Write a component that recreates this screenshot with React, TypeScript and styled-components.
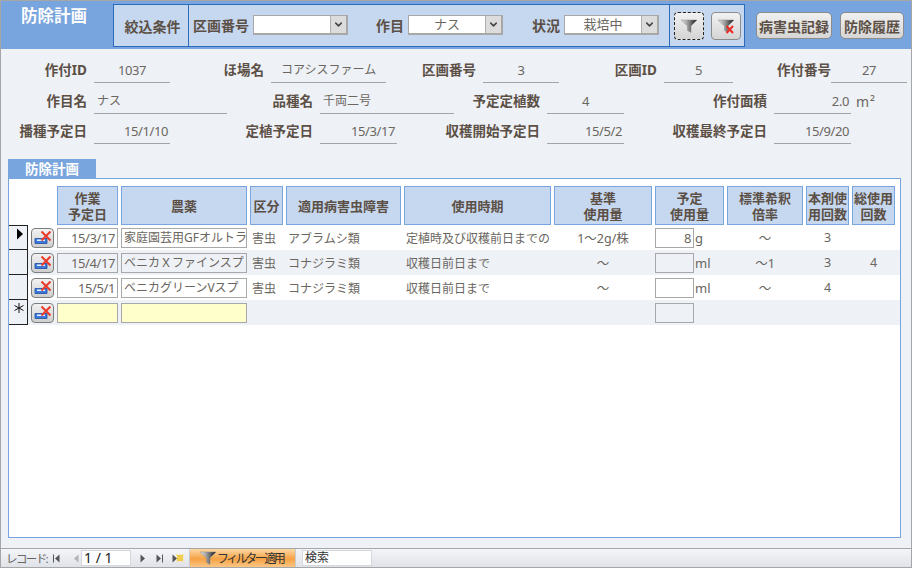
import { createGlobalStyle } from 'styled-components'
import styled from 'styled-components'
import { ChevronDown } from 'lucide-react'

const GlobalStyle = createGlobalStyle`
    html, body {
        margin: 0;
        padding: 0;
        background: #eef1f6;
    }
    * {
        box-sizing: border-box;
    }
`

type TField = {
    label: string
    value: string
    align?: 'left' | 'center' | 'right'
    flush?: boolean
    inset?: boolean
}

type TRecord = {
    date: string
    drug: string
    area: string
    disease: string
    timing: string
    base: string
    amount: string
    unit: string
    ratio: string
    count: string
    total: string
    alt: boolean
    current?: boolean
}

const formRows: { cols: string; fields: TField[]; unit?: string }[] = [
    {
        cols: '93px 76px 101px 115px 97px 76px 105px 69px 98px 76px',
        fields: [
            { label: '作付ID', value: '1037', align: 'center' },
            { label: 'ほ場名', value: 'コアシスファーム', align: 'left', inset: true },
            { label: '区画番号', value: '3', align: 'center' },
            { label: '区画ID', value: '5', align: 'center' },
            { label: '作付番号', value: '27', align: 'center', flush: true },
        ],
    },
    {
        cols: '93px 133px 93px 134px 93px 77px 150px 77px 30px',
        unit: 'm²',
        fields: [
            { label: '作目名', value: 'ナス' },
            { label: '品種名', value: '千両二号' },
            { label: '予定定植数', value: '4', align: 'center' },
            { label: '作付面積', value: '2.0', align: 'right' },
        ],
    },
    {
        cols: '93px 76px 150px 77px 150px 77px 150px 77px',
        fields: [
            { label: '播種予定日', value: '15/1/10', align: 'right' },
            { label: '定植予定日', value: '15/3/17', align: 'right' },
            { label: '収穫開始予定日', value: '15/5/2', align: 'right' },
            { label: '収穫最終予定日', value: '15/9/20', align: 'right' },
        ],
    },
]

const headers = [
    ['作業', '予定日'],
    ['農薬'],
    ['区分'],
    ['適用病害虫障害'],
    ['使用時期'],
    ['基準', '使用量'],
    ['予定', '使用量'],
    ['標準希釈', '倍率'],
    ['本剤使', '用回数'],
    ['総使用', '回数'],
]

const records: TRecord[] = [
    {
        date: '15/3/17', drug: '家庭園芸用GFオルトラ', area: '害虫', disease: 'アブラムシ類',
        timing: '定植時及び収穫前日までの', base: '1～2g/株', amount: '8', unit: 'g', ratio: '～',
        count: '3', total: '', alt: false, current: true,
    },
    {
        date: '15/4/17', drug: 'ベニカＸファインスプ', area: '害虫', disease: 'コナジラミ類',
        timing: '収穫日前日まで', base: '～', amount: '', unit: 'ml', ratio: '～1',
        count: '3', total: '4', alt: true,
    },
    {
        date: '15/5/1', drug: 'ベニカグリーンVスプ', area: '害虫', disease: 'コナジラミ類',
        timing: '収穫日前日まで', base: '～', amount: '', unit: 'ml', ratio: '～',
        count: '4', total: '', alt: false,
    },
]

function Funnel({ cleared = false }: { cleared?: boolean }) {
    return (
        <svg width="18" height="16" viewBox="0 0 18 16">
            <defs>
                <linearGradient id="funnelFill" x1="0" y1="0" x2="1" y2="0">
                    <stop offset="0" stopColor="#f0f0f0" />
                    <stop offset="0.5" stopColor="#8a8a8a" />
                    <stop offset="1" stopColor="#0c0c0c" />
                </linearGradient>
            </defs>
            <path d="M1 2 H17 L11 8 V14.5 L7.5 12.5 V8 Z" fill="url(#funnelFill)" stroke="#8a8a8a" strokeWidth="0.5" />
            {cleared && <path d="M9.5 8 L16 15 M16 8 L9.5 15" stroke="#ec2a22" strokeWidth="2" />}
        </svg>
    )
}

function DeleteIcon() {
    return (
        <svg width="18" height="15" viewBox="0 0 18 15">
            <path d="M1 8.5 H13 V13.5 H1 Z" fill="#3a78dc" stroke="#1f4c9c" strokeWidth="0.8" />
            <path d="M3 9.5 H11 V11 H3 Z" fill="#e4f0ff" />
            <path d="M7.5 1.5 L16.5 10.5 M16.5 1.5 L7.5 10.5" stroke="#ea3a2a" strokeWidth="2" />
        </svg>
    )
}

function Selector({ kind }: { kind?: 'current' | 'new' }) {
    return (
        <RowSelector $first={kind === 'current'}>
            {kind === 'current' && (
                <svg width="8" height="12" viewBox="0 0 8 12">
                    <path d="M1 0.5 L7 6 L1 11.5 Z" fill="#000000" />
                </svg>
            )}
            {kind === 'new' && (
                <svg width="10" height="10" viewBox="0 0 10 10">
                    <path d="M5 0 V10 M0.5 2.5 L9.5 7.5 M9.5 2.5 L0.5 7.5" stroke="#111111" strokeWidth="1" />
                </svg>
            )}
        </RowSelector>
    )
}

function Combo({ value }: { value: string }) {
    return (
        <ComboBox>
            <ComboText>{value}</ComboText>
            <ComboArrow>
                <ChevronDown size={11} strokeWidth={3.4} color="#444444" />
            </ComboArrow>
        </ComboBox>
    )
}

function NavArrow({ kind, muted = false }: { kind: 'first' | 'prev' | 'next' | 'last'; muted?: boolean }) {
    const color = muted ? '#b4b4b4' : '#555555'
    const right = kind === 'next' || kind === 'last'
    return (
        <svg width="8" height="9" viewBox="0 0 8 9">
            <path d={right ? 'M1.5 0.5 L6 4.5 L1.5 8.5 Z' : 'M6.5 0.5 L2 4.5 L6.5 8.5 Z'} fill={color} />
            {kind === 'first' && <path d="M0.5 0.5 V8.5" stroke={color} strokeWidth="1" />}
            {kind === 'last' && <path d="M7.5 0.5 V8.5" stroke={color} strokeWidth="1" />}
        </svg>
    )
}

function FieldPair({ field }: { field: TField }) {
    return (
        <>
            <FieldLabel $flush={field.flush}>{field.label}</FieldLabel>
            <FieldValue $align={field.align ?? 'left'} $inset={field.inset}>{field.value}</FieldValue>
        </>
    )
}

export default function App() {
    return (
        <Window>
            <GlobalStyle />
            <Header>
                <Title>防除計画</Title>
                <FilterBox>
                    <FilterCaption>絞込条件</FilterCaption>
                    <FilterFields>
                        <FilterGroup>
                            <HeadLabel>区画番号</HeadLabel>
                            <Combo value="" />
                        </FilterGroup>
                        <FilterGroup>
                            <HeadLabel>作目</HeadLabel>
                            <Combo value="ナス" />
                        </FilterGroup>
                        <FilterGroup>
                            <HeadLabel>状況</HeadLabel>
                            <Combo value="栽培中" />
                        </FilterGroup>
                    </FilterFields>
                    <FilterActions>
                        <IconButton $focused><Funnel /></IconButton>
                        <IconButton><Funnel cleared /></IconButton>
                    </FilterActions>
                </FilterBox>
                <TextButton $width={76}>病害虫記録</TextButton>
                <TextButton $width={64}>防除履歴</TextButton>
            </Header>

            <Content>
                <FormArea>
                    {formRows.map((row) => (
                        <FormRow key={row.fields[0].label} $cols={row.cols}>
                            {row.fields.map((field) => (
                                <FieldPair key={field.label} field={field} />
                            ))}
                            {row.unit && <Unit>{row.unit}</Unit>}
                        </FormRow>
                    ))}
                </FormArea>

                <TabLabel>防除計画</TabLabel>
                <Panel>
                    <HeadRow>
                        {headers.map((lines) => (
                            <HeadCell key={lines.join('')}>
                                {lines.map((line) => <div key={line}>{line}</div>)}
                            </HeadCell>
                        ))}
                    </HeadRow>
                    {records.map((record) => (
                        <DataRow key={record.date} $alt={record.alt}>
                            <Selector kind={record.current ? 'current' : undefined} />
                            <DeleteButton><DeleteIcon /></DeleteButton>
                            <Input $align="right" $alt={record.alt}>{record.date}</Input>
                            <Input $alt={record.alt}>{record.drug}</Input>
                            <Cell>{record.area}</Cell>
                            <Cell>{record.disease}</Cell>
                            <Cell>{record.timing}</Cell>
                            <Cell $center>{record.base}</Cell>
                            <AmountCell>
                                <AmountInput $align="right" $alt={record.alt}>{record.amount}</AmountInput>
                                {record.unit}
                            </AmountCell>
                            <Cell $center>{record.ratio}</Cell>
                            <Cell $center>{record.count}</Cell>
                            <Cell $center>{record.total}</Cell>
                        </DataRow>
                    ))}
                    <DataRow $alt>
                        <Selector kind="new" />
                        <DeleteButton><DeleteIcon /></DeleteButton>
                        <Input $required />
                        <Input $required />
                        <Cell />
                        <Cell />
                        <Cell />
                        <Cell />
                        <AmountCell>
                            <AmountInput $alt />
                        </AmountCell>
                    </DataRow>
                </Panel>
            </Content>

            <StatusBar>
                <RecordLabel>レコード:</RecordLabel>
                <NavGroup $gap={11}>
                    <NavArrow kind="first" />
                    <NavArrow kind="prev" muted />
                </NavGroup>
                <RecordInput>1 / 1</RecordInput>
                <NavGroup $gap={8}>
                    <NavArrow kind="next" />
                    <NavArrow kind="last" />
                    <NewRecord>
                        <NavArrow kind="next" />
                        <NewMark />
                    </NewRecord>
                </NavGroup>
                <FilterApplied>
                    <Funnel />
                    <FilterAppliedText>フィルター適用</FilterAppliedText>
                </FilterApplied>
                <SearchBox>検索</SearchBox>
            </StatusBar>
        </Window>
    )
}

const fontStack = '"Noto Sans", "Noto Sans CJK JP", sans-serif'
const labelColor = '#5c5046'
const textColor = '#6a6660'
const blue = '#78a5dd'
const paleBlue = '#c6d8f0'
const gridColumns = '19px 23px 61px 126px 33px 115px 147px 98px 69px 76px 43px 43px'

const Window = styled.div`
    display: flex;
    flex-direction: column;
    width: 912px;
    height: 568px;
    overflow: hidden;
    background: #eef1f6;
    border: 1px solid #a6a6a6;
    border-bottom: 0;
    font-family: ${fontStack};
    font-size: 12px;
    color: ${textColor};
`

const Header = styled.header`
    display: flex;
    align-items: flex-start;
    flex: none;
    height: 48px;
    padding-top: 3px;
    background: ${blue};
`

const Title = styled.div`
    width: 112px;
    padding: 0 0 0 20px;
    color: #ffffff;
    font-size: 16.5px;
    font-weight: 700;
    line-height: 24px;
`

const FilterBox = styled.div`
    display: flex;
    width: 632px;
    height: 43px;
    background: ${paleBlue};
    border: 1px solid #2c6bba;
`

const FilterCaption = styled.div`
    display: flex;
    align-items: center;
    justify-content: center;
    width: 75px;
    padding-left: 3px;
    border-right: 1px solid #2c6bba;
    color: ${labelColor};
    font-size: 14px;
    font-weight: 700;
`

const FilterFields = styled.div`
    display: flex;
    align-items: center;
    gap: 28px;
    width: 480px;
    padding: 0 0 1px 4px;
`

const FilterGroup = styled.div`
    display: flex;
    align-items: center;
    gap: 4px;
    & + & + & {
        margin-left: 1px;
    }
`

const HeadLabel = styled.span`
    color: ${labelColor};
    font-size: 14px;
    font-weight: 700;
    white-space: nowrap;
`

const ComboBox = styled.div`
    display: flex;
    width: 95px;
    height: 20px;
    background: #ffffff;
    border: 1px solid #a8a8a8;
    border-right-width: 2px;
    border-bottom-width: 2px;
`

const ComboText = styled.div`
    flex: 1;
    text-align: center;
    font-size: 13px;
    line-height: 17px;
`

const ComboArrow = styled.div`
    display: flex;
    align-items: center;
    justify-content: center;
    width: 16px;
    background: #dcdcdc;
    border-left: 1px solid #b0b0b0;
`

const FilterActions = styled.div`
    display: flex;
    align-items: center;
    gap: 7px;
    flex: 1;
    padding-left: 4px;
    border-left: 1px solid #2c6bba;
`

const IconButton = styled.button<{ $focused?: boolean }>`
    display: flex;
    align-items: center;
    justify-content: center;
    width: 30px;
    height: 28px;
    padding: 0;
    background: linear-gradient(#f2f2f2, #d4d4d4);
    border: 1px ${(p) => (p.$focused ? 'dashed #222222' : 'solid #8c8c8c')};
    border-radius: 4px;
`

const TextButton = styled.button<{ $width: number }>`
    width: ${(p) => p.$width}px;
    height: 27px;
    margin: 8px 0 0 ${(p) => (p.$width === 76 ? 11 : 8)}px;
    padding: 0;
    background: linear-gradient(#f0f0f0, #d6d6d6);
    border: 1px solid #8c8c8c;
    border-radius: 5px;
    color: ${labelColor};
    font-family: ${fontStack};
    font-size: 14px;
    font-weight: 700;
    white-space: nowrap;
`

const Content = styled.main`
    display: flex;
    flex: 1;
    flex-direction: column;
    min-height: 0;
    padding: 9px 10px 10px 7px;
`

const FormArea = styled.section`
    display: flex;
    flex-direction: column;
    gap: 9.5px;
    margin: 0 -10px 19px -7px;
`

const FormRow = styled.div<{ $cols: string }>`
    display: grid;
    grid-template-columns: ${(p) => p.$cols};
    height: 21px;
`

const FieldLabel = styled.div<{ $flush?: boolean }>`
    padding-right: ${(p) => (p.$flush ? 0 : 7)}px;
    color: ${labelColor};
    font-size: 13.5px;
    font-weight: 700;
    line-height: 24px;
    text-align: right;
    white-space: nowrap;
`

const FieldValue = styled.div<{ $align: 'left' | 'center' | 'right'; $inset?: boolean }>`
    padding: 0 ${(p) => (p.$align === 'right' ? 2 : 0)}px 0 ${(p) => (p.$inset ? 10 : p.$align === 'left' ? 3 : 0)}px;
    border-bottom: 1px solid #a4a4a4;
    font-size: ${(p) => (p.$align === 'left' ? 12 : 13)}px;
    letter-spacing: ${(p) => (p.$align === 'left' ? 0 : -0.4)}px;
    line-height: 24px;
    text-align: ${(p) => p.$align};
    white-space: nowrap;
`

const Unit = styled.div`
    padding: 4px 0 0 5px;
    font-size: 14px;
    letter-spacing: 1px;
    line-height: 18px;
    white-space: nowrap;
`

const TabLabel = styled.div`
    flex: none;
    width: 88px;
    height: 19px;
    padding-left: 17px;
    background: ${blue};
    color: #ffffff;
    font-size: 13.5px;
    font-weight: 700;
    line-height: 20px;
`

const Panel = styled.section`
    flex: 1;
    padding-top: 7px;
    background: #ffffff;
    border: 1px solid ${blue};
`

const HeadRow = styled.div`
    display: grid;
    grid-template-columns: 61px 126px 33px 115px 147px 98px 69px 76px 43px 43px;
    column-gap: 3px;
    height: 39px;
    padding-left: 48px;
`

const HeadCell = styled.div`
    display: flex;
    flex-direction: column;
    justify-content: center;
    background: ${paleBlue};
    border: 1px solid ${blue};
    color: ${labelColor};
    font-size: 13px;
    font-weight: 700;
    line-height: 16px;
    text-align: center;
    white-space: nowrap;
`

const DataRow = styled.div<{ $alt?: boolean }>`
    display: grid;
    grid-template-columns: ${gridColumns};
    column-gap: 3px;
    align-items: center;
    height: 25px;
    background: ${(p) => (p.$alt ? '#eef1f6' : '#ffffff')};
`

const RowSelector = styled.div<{ $first?: boolean }>`
    display: flex;
    justify-content: flex-end;
    align-self: stretch;
    padding: ${(p) => (p.$first ? 2 : 3)}px 3px 0 0;
    background: #eef1f6;
    border-top: ${(p) => (p.$first ? '1px solid #222222' : '0')};
    border-right: 1px solid #222222;
    border-bottom: 1px solid #222222;
`

const DeleteButton = styled.button`
    display: flex;
    align-items: center;
    justify-content: center;
    width: 23px;
    height: 20px;
    padding: 0;
    background: linear-gradient(#f2f2f2, #cfcfcf);
    border: 1px solid #7c7c7c;
    border-radius: 4px;
`

const Input = styled.div<{ $align?: string; $alt?: boolean; $required?: boolean }>`
    height: 20px;
    padding: 0 2px;
    overflow: hidden;
    background: ${(p) => (p.$required ? '#ffffcc' : p.$alt ? '#eef1f6' : '#ffffff')};
    border: 1px solid #a8a8a8;
    font-size: ${(p) => (p.$align === 'right' ? 13 : 12)}px;
    letter-spacing: ${(p) => (p.$align === 'right' ? -0.4 : 0)}px;
    line-height: 18px;
    text-align: ${(p) => p.$align ?? 'left'};
    white-space: nowrap;
`

const Cell = styled.div<{ $center?: boolean }>`
    padding-left: ${(p) => (p.$center ? 0 : 2)}px;
    font-size: ${(p) => (p.$center ? 12.5 : 12)}px;
    text-align: ${(p) => (p.$center ? 'center' : 'left')};
    white-space: nowrap;
`

const AmountCell = styled.div`
    display: flex;
    align-items: center;
    gap: 1px;
    font-size: 13px;
`

const AmountInput = styled(Input)`
    flex: none;
    width: 39px;
    font-size: 13px;
`

const StatusBar = styled.footer`
    display: flex;
    align-items: center;
    flex: none;
    height: 20px;
    padding-left: 5px;
    background: linear-gradient(#f4f5f8, #dfe2e8);
    border-top: 1px solid #a6a6a6;
    border-bottom: 1px solid #a6a6a6;
`

const RecordLabel = styled.span`
    width: 47px;
    color: #666666;
    font-size: 11.5px;
    letter-spacing: -1.6px;
    white-space: nowrap;
`

const NavGroup = styled.div<{ $gap: number }>`
    display: flex;
    align-items: center;
    gap: ${(p) => p.$gap}px;
`

const RecordInput = styled.div`
    width: 50px;
    height: 16px;
    margin: 0 8px 0 1px;
    padding-left: 2px;
    background: #ffffff;
    border: 1px solid #d4d8de;
    color: #222222;
    font-size: 14px;
    line-height: 14px;
    white-space: pre;
`

const NewRecord = styled.div`
    display: flex;
    align-items: center;
    gap: 0;
    margin-right: 6px;
    & svg {
        margin-right: -2px;
    }
`

const NewMark = styled.span`
    width: 6px;
    height: 6px;
    background: #f0cc50;
    outline: 1px dotted #f6e6a0;
`

const FilterApplied = styled.div`
    display: flex;
    align-items: center;
    width: 107px;
    height: 18px;
    padding-left: 9px;
    background: linear-gradient(#fbd9a6, #f6a244 55%, #fbc684);
    border-left: 1px solid #c8ccd2;
    border-right: 1px solid #c8ccd2;
    color: #333333;
`

const FilterAppliedText = styled.span`
    font-size: 12px;
    letter-spacing: -2.5px;
    white-space: nowrap;
`

const SearchBox = styled.div`
    width: 70px;
    height: 16px;
    margin-left: 6px;
    padding-left: 2px;
    background: #ffffff;
    border: 1px solid #d4d8de;
    color: #333333;
    font-size: 12px;
    line-height: 14px;
`
